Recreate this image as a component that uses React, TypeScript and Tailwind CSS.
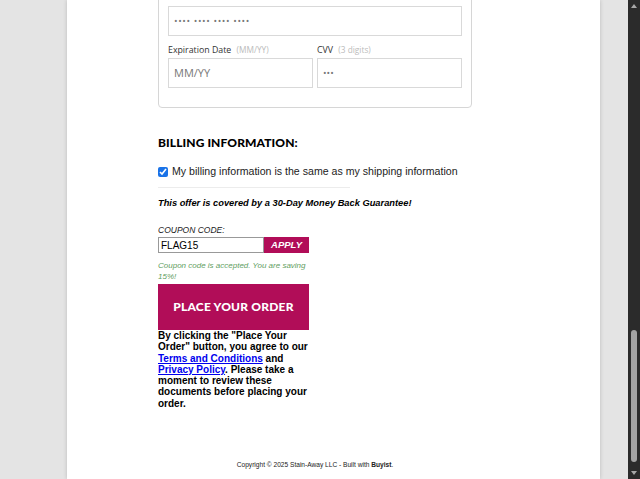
import React from "react";

const magenta = "bg-[#b10d58]";

function Scrollbar() {
  return (
    <div className="flex w-[12px] shrink-0 flex-col items-center bg-[#2b2b2b]">
      <svg width="8" height="6" viewBox="0 0 8 6" className="mt-[3px]">
        <polygon points="4,1 7,5 1,5" fill="#a8a8a8" />
      </svg>
      <div className="flex-1" />
      <div className="mb-[8px] h-[132px] w-[6px] rounded-full bg-[#a3a3a3]" />
      <svg width="8" height="6" viewBox="0 0 8 6" className="mb-[3px]">
        <polygon points="1,1 7,1 4,5" fill="#a8a8a8" />
      </svg>
    </div>
  );
}

function CardFields() {
  return (
    <div
      className="mt-[-10px] rounded-[4px] border border-[#d6d6d6] px-[9px] pb-[19px] pt-[15px]"
      style={{ fontFamily: "'Open Sans', sans-serif" }}
    >
      <div className="flex h-[30px] items-center border border-[#d9d9d9] px-[5px] text-[9.5px] tracking-[0.6px] text-[#777]">
        •••• •••• •••• ••••
      </div>
      <div className="mt-[6px] flex gap-[4px]">
        <div className="flex-1">
          <div className="h-[15px] text-[8.8px] leading-[15px] text-[#333]">
            Expiration Date <span className="ml-[3px] text-[8.3px] text-[#bbb]">(MM/YY)</span>
          </div>
          <div className="mt-[1px] flex h-[30px] items-center border border-[#d9d9d9] px-[5px] text-[11px] text-[#777]">
            MM/YY
          </div>
        </div>
        <div className="flex-1">
          <div className="h-[15px] text-[8.8px] leading-[15px] text-[#333]">
            CVV <span className="ml-[3px] text-[8.3px] text-[#bbb]">(3 digits)</span>
          </div>
          <div className="mt-[1px] flex h-[30px] items-center border border-[#d9d9d9] px-[5px] text-[9.5px] text-[#777]">
            •••
          </div>
        </div>
      </div>
    </div>
  );
}

function Billing() {
  return (
    <div className="flex flex-col" style={{ fontFamily: "'Liberation Sans', Arial, sans-serif" }}>
      <h2
        className="mt-[25px] h-[20px] text-[12px] font-black leading-[20px] tracking-[0.1px] text-black"
        style={{ fontFamily: "Lato, sans-serif" }}
      >
        BILLING INFORMATION:
      </h2>
      <label className="mt-[9px] flex h-[20px] items-center gap-[4px] whitespace-nowrap text-[10.6px] text-[#222]">
        <input
          type="checkbox"
          defaultChecked
          className="m-0 h-[10px] w-[10px] accent-[#1a73e8]"
        />
        My billing information is the same as my shipping information
      </label>
      <div className="mt-[5px] w-[192px] border-t border-[#ececec]" />
      <p className="mt-[8px] h-[14px] text-[9.3px] font-bold italic leading-[14px] text-black">
        This offer is covered by a 30-Day Money Back Guarantee!
      </p>
      <div className="w-[151px]">
        <div className="mt-[14px] h-[12px] text-[8.5px] italic leading-[12px] text-[#222]">
          COUPON CODE:
        </div>
        <div className="mt-[1px] flex h-[16px]">
          <div className="flex flex-1 items-center border border-[#999] px-[2px] text-[10px] text-black">
            FLAG15
          </div>
          <button
            className={`${magenta} flex w-[45px] items-center justify-center text-[9.5px] font-bold italic text-white`}
          >
            APPLY
          </button>
        </div>
        <p className="mt-[7px] text-[8px] italic leading-[11px] text-[#5f9e5f]">
          Coupon code is accepted. You are saving 15%!
        </p>
        <button
          className={`${magenta} mt-[2px] flex h-[46px] w-full items-center justify-center text-[12px] font-black tracking-[0.2px] text-white`}
          style={{ fontFamily: "Lato, sans-serif" }}
        >
          PLACE YOUR ORDER
        </button>
        <p className="text-[10px] font-bold leading-[11.3px] text-black">
          By clicking the "Place Your Order" button, you agree to our{" "}
          <a href="#" className="text-[#0000ee] underline">
            Terms and Conditions
          </a>{" "}
          and{" "}
          <a href="#" className="text-[#0000ee] underline">
            Privacy Policy
          </a>
          . Please take a moment to review these documents before placing your order.
        </p>
      </div>
      <footer className="mt-[51px] text-center text-[6.6px] leading-[10px] text-[#222]">
        Copyright © 2025 Stain-Away LLC - Built with <span className="font-bold">Buyist</span>.
      </footer>
    </div>
  );
}

export default function App() {
  return (
    <div className="flex h-[479px] w-[640px] overflow-hidden bg-[#e4e4e4]">
      <div className="flex-1">
        <div className="ml-[67px] h-full w-[533px] overflow-hidden bg-white shadow-[0_0_4px_rgba(0,0,0,0.18)]">
          <div className="ml-[91px] w-[314px]">
            <CardFields />
            <Billing />
          </div>
        </div>
      </div>
      <Scrollbar />
    </div>
  );
}
